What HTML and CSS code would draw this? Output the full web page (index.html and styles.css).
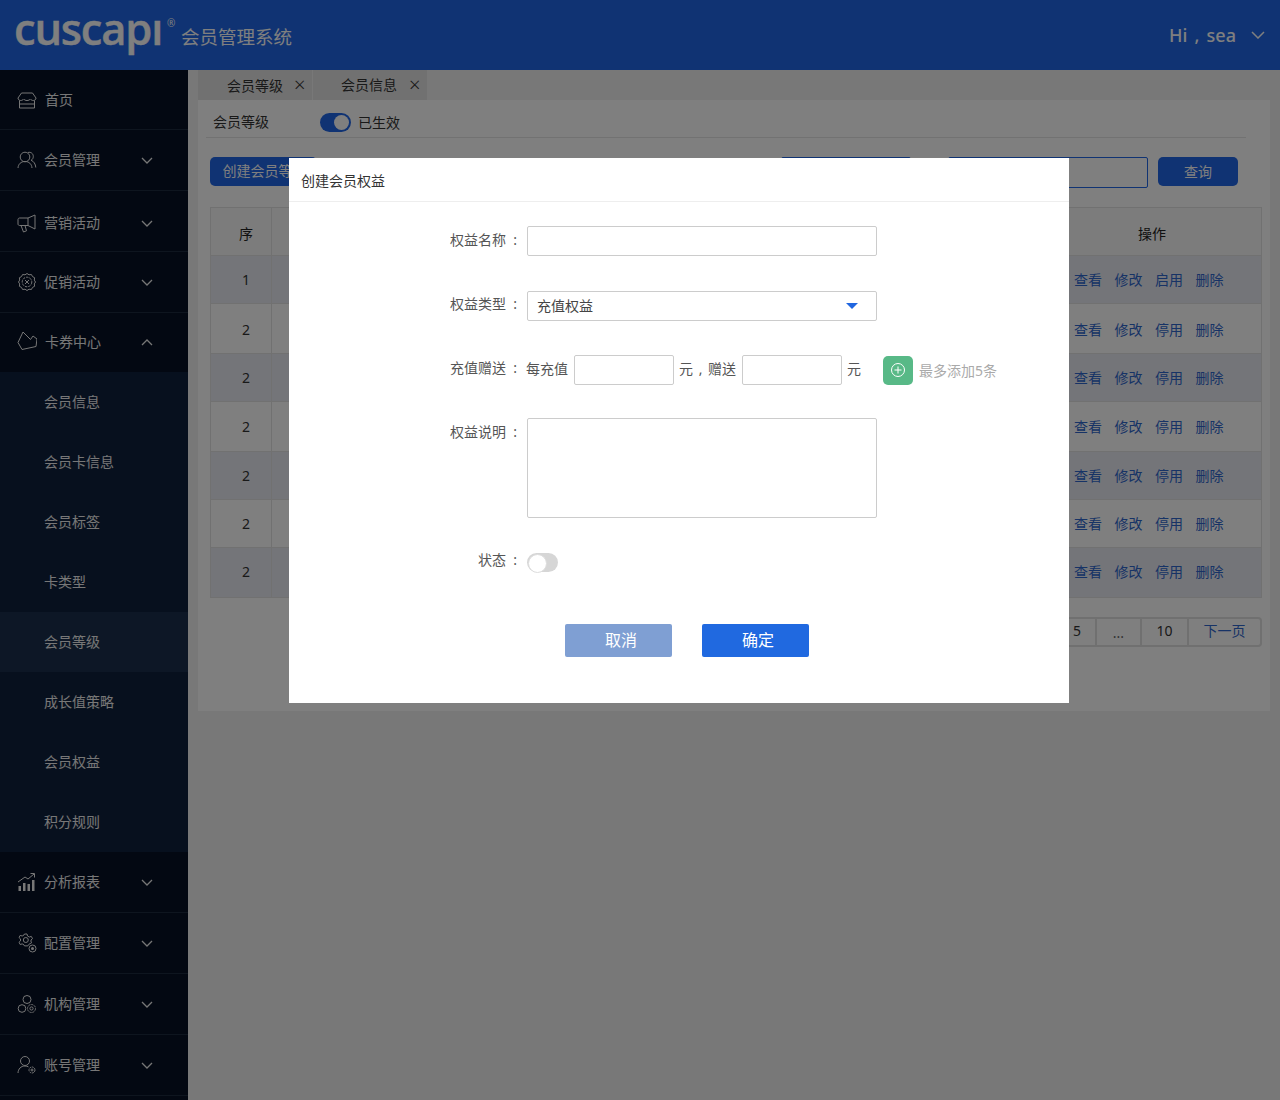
FILE: index.html
```
<!DOCTYPE html>
<html>
<head>
    <meta charset="utf-8">
    <link rel="stylesheet" href="styles.css">
    <title>会员管理系统</title>
</head>
<body>
    <header class="topbar">
        <div class="logo">cuscapı<sup class="logo-mark">®</sup></div>
        <div class="system-name">会员管理系统</div>
        <div class="user">Hi , sea</div>
        <svg class="user-arrow" width="14" height="8" viewBox="0 0 14 8"><path d="M1 1l6 6 6-6" fill="none" stroke="currentColor" stroke-width="1.5"/></svg>
    </header>

    <div class="layout">
        <nav class="sidebar">
            <a class="nav-item">
                <svg class="nav-icon" width="20" height="20" viewBox="0 0 20 20"><path d="M4.500 3h11L19 8c0 1.600-1.300 2.500-2.700 2.500-1.300 0-2.200-.6-2.900-1.500-.7.900-1.900 1.500-3.400 1.500S7.300 9.900 6.600 9c-.7.900-1.600 1.500-2.900 1.500C2.300 10.500 1 9.600 1 8z"/><path d="M2.500 10.500V18h15v-7.500M3 14h14"/></svg>
                <span class="home-text">首页</span>
            </a>
            <a class="nav-item">
                <svg class="nav-icon" width="20" height="20" viewBox="0 0 20 20"><circle cx="8" cy="7" r="4.800"/><path d="M1 18c.3-4 3-6.500 7-6.500s6.700 2.500 7 6.500M11 2.500c2.700-.9 5.300 1 5.300 4 0 1.700-.8 3-2.200 3.800 2.700 1 4.400 3.600 4.700 7.200"/></svg>
                <span>会员管理</span>
                <svg class="nav-arrow" width="12" height="7" viewBox="0 0 12 7"><path d="M1 1l5 5 5-5"/></svg>
            </a>
            <a class="nav-item nudge">
                <svg class="nav-icon" width="20" height="20" viewBox="0 0 20 20"><path d="M18 2v14l-7-3.500H2.500c-.8 0-1.500-.7-1.500-1.500V6.500C1 5.700 1.700 5 2.500 5H11zM11 5v7.500M4 12.500l2.500 6.500 3-1.200L8 12.500"/></svg>
                <span>营销活动</span>
                <svg class="nav-arrow" width="12" height="7" viewBox="0 0 12 7"><path d="M1 1l5 5 5-5"/></svg>
            </a>
            <a class="nav-item">
                <svg class="nav-icon" width="20" height="20" viewBox="0 0 20 20"><path d="M10 1.500l2 1.300 2.400-.3 1.100 2.100 2.100 1.100-.3 2.400 1.200 1.900-1.200 1.900.3 2.400-2.100 1.100-1.100 2.100-2.400-.3-2 1.300-2-1.300-2.400.3-1.100-2.100-2.100-1.100.3-2.400L1.500 10l1.200-1.900-.3-2.400 2.100-1.100 1.100-2.100 2.400.3z"/><circle cx="10" cy="10" r="4.800" stroke-dasharray="2.500 1"/><path d="M8 8l4 4M12 8l-4 4"/></svg>
                <span>促销活动</span>
                <svg class="nav-arrow" width="12" height="7" viewBox="0 0 12 7"><path d="M1 1l5 5 5-5"/></svg>
            </a>
            <a class="nav-item nav-open">
                <svg class="nav-icon card-icon" width="20" height="20" viewBox="0 0 20 20"><path d="M6 1L1 11.500l4 7 14-3 1-7.500-4-3-2.500 3.500z"/></svg>
                <span>卡券中心</span>
                <svg class="nav-arrow" width="12" height="7" viewBox="0 0 12 7"><path d="M1 6l5-5 5 5"/></svg>
            </a>
            <div class="subnav">
                <a class="sub-item">会员信息</a>
                <a class="sub-item">会员卡信息</a>
                <a class="sub-item">会员标签</a>
                <a class="sub-item">卡类型</a>
                <a class="sub-item active">会员等级</a>
                <a class="sub-item">成长值策略</a>
                <a class="sub-item">会员权益</a>
                <a class="sub-item">积分规则</a>
            </div>
            <a class="nav-item">
                <svg class="nav-icon" width="20" height="20" viewBox="0 0 20 20"><path d="M1 10l7-5 3 2 6-5M13.500 1.500H17.500V5.500"/><path class="solid" d="M1.500 14h2.500v5H1.500zM6 11h2.500v8H6zM10.500 12h2.500v7h-2.500zM15 8h2.500v11H15z"/></svg>
                <span>分析报表</span>
                <svg class="nav-arrow" width="12" height="7" viewBox="0 0 12 7"><path d="M1 1l5 5 5-5"/></svg>
            </a>
            <a class="nav-item">
                <svg class="nav-icon" width="20" height="20" viewBox="0 0 20 20"><path d="M7.500 1h2.500l.5 2 1.800 1 2-.6 1.200 2.200-1.500 1.400v2l.8.600-3 1.800-1 1.500H7.500L7 11.900l-1.800-1-2 .6L2 9.300l1.500-1.400v-2L2 4.500l1.200-2.100 2 .6L7 2z"/><circle cx="8.800" cy="7" r="2.500"/><circle cx="15.500" cy="15.500" r="3.500"/><circle class="solid" cx="15.500" cy="15.500" r="1.500"/></svg>
                <span>配置管理</span>
                <svg class="nav-arrow" width="12" height="7" viewBox="0 0 12 7"><path d="M1 1l5 5 5-5"/></svg>
            </a>
            <a class="nav-item">
                <svg class="nav-icon" width="20" height="20" viewBox="0 0 20 20"><circle cx="10" cy="5.500" r="4"/><circle cx="5" cy="14.500" r="3.800"/><circle cx="14.500" cy="14.500" r="4" stroke-dasharray="2.200 .8"/><circle cx="14.500" cy="14.500" r="1.600"/></svg>
                <span>机构管理</span>
                <svg class="nav-arrow" width="12" height="7" viewBox="0 0 12 7"><path d="M1 1l5 5 5-5"/></svg>
            </a>
            <a class="nav-item">
                <svg class="nav-icon" width="20" height="20" viewBox="0 0 20 20"><circle cx="8" cy="6" r="4.500"/><path d="M1 18c.2-4 2.800-7 7-7 1.300 0 2.500.3 3.500.9"/><circle cx="15" cy="15" r="3" stroke-dasharray="2 .7"/><circle cx="15" cy="15" r="1"/></svg>
                <span>账号管理</span>
                <svg class="nav-arrow" width="12" height="7" viewBox="0 0 12 7"><path d="M1 1l5 5 5-5"/></svg>
            </a>
        </nav>

        <main class="content">
            <div class="tabs">
                <div class="tab"><span>会员等级</span><i class="tab-close">×</i></div>
                <div class="tab"><span>会员信息</span><i class="tab-close">×</i></div>
            </div>
            <section class="panel">
                <div class="panel-head">
                    <span class="panel-title">会员等级</span>
                    <span class="switch on"></span>
                    <span class="switch-text">已生效</span>
                </div>
                <div class="toolbar">
                    <button class="btn create-btn">创建会员等级</button>
                    <div class="filter filter-select"></div>
                    <div class="filter filter-input"></div>
                    <button class="btn search-btn">查询</button>
                </div>
                <table class="grid">
                    <thead>
                        <tr><th class="col-no">序</th><th></th><th class="col-ops">操作</th></tr>
                    </thead>
                    <tbody>
                        <tr><td class="col-no">1</td><td></td><td class="ops"><a>查看</a><a>修改</a><a>启用</a><a>删除</a></td></tr>
                        <tr class="row-low"><td class="col-no">2</td><td></td><td class="ops"><a>查看</a><a>修改</a><a>停用</a><a>删除</a></td></tr>
                        <tr><td class="col-no">2</td><td></td><td class="ops"><a>查看</a><a>修改</a><a>停用</a><a>删除</a></td></tr>
                        <tr><td class="col-no">2</td><td></td><td class="ops"><a>查看</a><a>修改</a><a>停用</a><a>删除</a></td></tr>
                        <tr><td class="col-no">2</td><td></td><td class="ops"><a>查看</a><a>修改</a><a>停用</a><a>删除</a></td></tr>
                        <tr class="short"><td class="col-no">2</td><td></td><td class="ops"><a>查看</a><a>修改</a><a>停用</a><a>删除</a></td></tr>
                        <tr class="tall"><td class="col-no">2</td><td></td><td class="ops"><a>查看</a><a>修改</a><a>停用</a><a>删除</a></td></tr>
                    </tbody>
                </table>
                <div class="pager">
                    <a class="page page-num">5</a>
                    <a class="page page-more">...</a>
                    <a class="page page-last">10</a>
                    <a class="page page-next">下一页</a>
                </div>
            </section>
        </main>
    </div>

    <div class="overlay">
        <div class="modal">
            <div class="modal-title">创建会员权益</div>
            <form class="modal-form">
                <div class="form-row row-name">
                    <label class="form-label">权益名称&nbsp;&nbsp;:</label>
                    <input class="field" type="text">
                </div>
                <div class="form-row row-type">
                    <label class="form-label">权益类型&nbsp;&nbsp;:</label>
                    <div class="field select-field">
                        <span>充值权益</span>
                        <i class="caret"></i>
                    </div>
                </div>
                <div class="form-row row-gift">
                    <label class="form-label">充值赠送&nbsp;&nbsp;:</label>
                    <span class="gift-text">每充值</span>
                    <input class="field small-field" type="text">
                    <span class="gift-text">元 , 赠送</span>
                    <input class="field small-field" type="text">
                    <span class="gift-text">元</span>
                    <button class="add-btn" type="button">
                        <svg width="16" height="16" viewBox="0 0 16 16"><circle cx="8" cy="8" r="6.500"/><path d="M8 4.500v7M4.500 8h7"/></svg>
                    </button>
                    <span class="add-hint">最多添加5条</span>
                </div>
                <div class="form-row row-desc">
                    <label class="form-label">权益说明&nbsp;&nbsp;:</label>
                    <textarea class="field desc-field"></textarea>
                </div>
                <div class="form-row row-state">
                    <label class="form-label">状态&nbsp;&nbsp;:</label>
                    <span class="switch off"></span>
                </div>
                <div class="form-actions">
                    <button class="action cancel" type="button">取消</button>
                    <button class="action confirm" type="button">确定</button>
                </div>
            </form>
        </div>
    </div>
</body>
</html>
```
FILE: styles.css
```
* {
    box-sizing: border-box;
}

body {
    margin: 0;
    height: 1100px;
    overflow: hidden;
    background-color: #f0f0f0;
    color: #333;
    font-family: "Noto Sans", "Noto Sans CJK SC", sans-serif;
    font-size: 14px;
}

button,
input,
textarea {
    font-family: inherit;
}

/* top bar */
.topbar {
    display: flex;
    align-items: center;
    height: 70px;
    padding: 0 15px;
    background-color: #2066e6;
    color: #fff;
}

.logo {
    width: 166px;
    margin: -12px 0 0 -1px;
    font-family: "Open Sans", sans-serif;
    font-size: 43.5px;
    font-weight: 600;
    line-height: 60px;
    letter-spacing: -1.2px;
    white-space: nowrap;
    flex-shrink: 0;
    -webkit-text-stroke: 0.4px #fff;
}

.logo-mark {
    position: relative;
    top: -18px;
    margin-left: 5px;
    font-size: 10px;
    font-weight: 400;
    line-height: 0;
    letter-spacing: 0;
    vertical-align: baseline;
    -webkit-text-stroke: 0;
}

.system-name {
    margin: 2px 0 0 1px;
    font-size: 18.5px;
}

.user {
    margin-left: auto;
    font-size: 18px;
    font-weight: 500;
    word-spacing: 2.5px;
}

.user-arrow {
    margin-left: 15px;
    color: #fff;
}

/* side menu */
.layout {
    display: flex;
    height: 1030px;
}

.sidebar {
    width: 188px;
    flex-shrink: 0;
    background-color: #061024;
    color: #eee;
}

.nav-item {
    display: flex;
    align-items: center;
    height: 61px;
    padding: 0 35px 0 17px;
    border-bottom: 1px solid #1c2a3e;
}

.nav-item span {
    margin-top: -2px;
}

.nav-item:first-child {
    height: 60px;
}

.nav-item.nudge {
    padding-top: 4px;
}

.nav-item.nav-open {
    height: 59px;
    border-bottom: none;
}

.nav-open span {
    margin-top: -3px;
}

.nav-icon {
    flex-shrink: 0;
    margin-right: 7px;
}

.nav-item .home-text {
    margin-left: 1px;
}

.card-icon {
    margin: -4px 8px 0 0;
}

.nav-icon * {
    fill: none;
    stroke: currentColor;
    stroke-width: 1;
}

.nav-icon .solid {
    fill: currentColor;
    stroke: none;
}

.nav-arrow {
    margin-left: auto;
}

.nav-arrow path {
    fill: none;
    stroke: currentColor;
    stroke-width: 1.3;
}

.subnav {
    background-color: #0e203c;
}

.sub-item {
    display: flex;
    align-items: center;
    height: 60px;
    padding: 0 0 2px 44px;
}

.sub-item.active {
    background-color: #1a2e4c;
}

/* main area */
.content {
    flex: 1;
    padding-left: 10px;
    padding-right: 10px;
}

.tabs {
    display: flex;
    gap: 1px;
    height: 30px;
}

.tab {
    display: flex;
    align-items: center;
    width: 114px;
    padding-left: 29px;
    background-color: #e2e2e2;
    color: #333;
}

.tab:last-child {
    padding-left: 28px;
}

.tab:last-child span {
    margin-top: -2px;
}

.tab-close {
    margin-left: 11px;
    font-size: 20px;
    font-style: normal;
    font-weight: 300;
    line-height: 1;
}

.tab:last-child .tab-close {
    margin-left: 12px;
}

.panel {
    height: 611px;
    padding: 0 8px 0 12px;
    background-color: #fff;
}

.panel-head {
    display: flex;
    align-items: center;
    width: 1040px;
    height: 38px;
    margin-left: -4px;
    padding: 7px 0 0 7px;
    border-bottom: 1px solid #e4e4e4;
}

.panel-title {
    width: 107px;
    margin-top: -2px;
}

.switch {
    display: inline-block;
    position: relative;
    width: 31px;
    height: 19px;
    border-radius: 10px;
}

.switch::after {
    content: "";
    position: absolute;
    top: 2px;
    width: 15px;
    height: 15px;
    border-radius: 50%;
    background-color: #fff;
}

.switch.on {
    background-color: #2066e6;
}

.switch.on::after {
    right: 2px;
}

.switch.off {
    background-color: #d6d6d6;
}

.switch.off::after {
    left: 1px;
    top: 1px;
    width: 17px;
    height: 17px;
    border: 1px solid #ddd;
}

.switch-text {
    margin-left: 7px;
}

.toolbar {
    display: flex;
    align-items: flex-start;
    height: 50px;
    margin-top: 19px;
    padding-right: 24px;
}

.btn {
    flex-shrink: 0;
    height: 29px;
    padding: 0 0 3px;
    border: none;
    border-radius: 5px;
    background-color: #2066e6;
    color: #fff;
    font-size: 14px;
}

.create-btn {
    width: 107px;
    padding-left: 2px;
    white-space: nowrap;
}

.filter {
    height: 31px;
    border: 1px solid #2066e6;
    border-radius: 2px;
}

.filter-select {
    width: 130px;
    margin-left: auto;
}

.filter-input {
    width: 200px;
    margin-left: 37px;
}

.search-btn {
    width: 80px;
    margin-left: 10px;
    padding-bottom: 1px;
}

.grid {
    width: 1052px;
    border-collapse: collapse;
    table-layout: fixed;
}

.grid th,
.grid td {
    border: 1px solid #e2e2e2;
    font-weight: 400;
    text-align: center;
}

.grid th {
    height: 48px;
    padding-top: 3px;
    background-color: #f8f8f8;
    color: #222;
}

.grid th.col-ops {
    width: 220px;
    padding-left: 2px;
}

.col-no {
    width: 61px;
    padding-left: 11px;
}

.grid tbody tr:nth-child(odd) {
    height: 48px;
    background-color: #e8ebf3;
}

.grid tbody tr:nth-child(even) {
    height: 50px;
}

.grid tbody tr.short {
    height: 48px;
}

.grid tbody tr.tall {
    height: 50px;
}

.grid .ops {
    padding: 0 0 2px 32px;
    text-align: left;
}

.grid tr.row-low td {
    padding-top: 2px;
    padding-bottom: 0;
}

.grid tr.row-low .ops {
    padding-top: 0;
}

.grid tr.tall td {
    padding-bottom: 3px;
}

.ops a {
    margin-right: 12.5px;
    color: #2f66cc;
}

.pager {
    display: flex;
    justify-content: flex-end;
    width: 1052px;
    height: 30px;
    margin-top: 19px;
}

.page {
    display: flex;
    align-items: center;
    justify-content: center;
    padding-bottom: 4px;
    border: 2px solid #e0e0e0;
    border-left-width: 0;
}

.page-num {
    width: 38px;
}

.page-more {
    width: 45px;
    padding-bottom: 0;
    color: #666;
}

.page-last {
    width: 47px;
}

.page-next {
    width: 73px;
    border-radius: 0 4px 4px 0;
    color: #2f66cc;
}

/* dialog */
.overlay {
    position: fixed;
    top: 0;
    left: 0;
    right: 0;
    bottom: 0;
    padding: 158px 0 0 289px;
    background-color: rgba(0, 0, 0, 0.5);
}

.modal {
    width: 780px;
    height: 545px;
    background-color: #fff;
}

.modal-title {
    height: 44px;
    padding: 13px 12px 0;
    border-bottom: 1px solid #eee;
    color: #333;
    line-height: 20px;
}

.modal-form {
    padding-top: 24px;
}

.form-row {
    display: flex;
    align-items: center;
}

.form-label {
    width: 228px;
    margin: -5px 10px 0 0;
    color: #555;
    text-align: right;
}

.row-type .form-label,
.row-gift .form-label,
.row-state .form-label {
    margin-top: -7px;
}

.field {
    display: block;
    width: 350px;
    height: 30px;
    padding: 0 9px;
    border: 1px solid #ccc;
    border-radius: 2px;
    background-color: #fff;
    outline: none;
}

.row-type {
    margin-top: 35px;
}

.row-gift {
    margin-top: 34px;
}

.row-desc {
    align-items: flex-start;
    margin-top: 33px;
}

.row-desc .form-label {
    margin-top: 3px;
}

.row-state {
    margin-top: 35px;
}

.select-field {
    display: flex;
    align-items: center;
    justify-content: space-between;
    padding-right: 18px;
    color: #444;
}

.select-field span {
    margin-top: -2px;
}

.caret {
    margin-top: -1px;
    border-top: 6px solid #2066e0;
    border-left: 6px solid transparent;
    border-right: 6px solid transparent;
}

.gift-text {
    margin: -4px 0 0 -1px;
    color: #555;
    white-space: nowrap;
    word-spacing: 2px;
}

.small-field {
    width: 100px;
    margin: 0 5px 0 6px;
}

.small-field + .gift-text {
    margin-left: 0;
}

.add-btn {
    display: flex;
    align-items: center;
    justify-content: center;
    flex-shrink: 0;
    width: 30px;
    height: 29px;
    margin-left: 22px;
    padding: 0;
    border: none;
    border-radius: 5px;
    background-color: #58b987;
}

.add-btn circle,
.add-btn path {
    fill: none;
    stroke: #fff;
    stroke-width: 1;
}

.add-hint {
    margin: 0 0 0 6px;
    color: #aaa;
}

.desc-field {
    height: 100px;
    resize: none;
}

.form-actions {
    display: flex;
    gap: 30px;
    margin: 52px 0 0 276px;
}

.action {
    width: 107px;
    height: 33px;
    padding: 0 0 3px 5px;
    border: none;
    border-radius: 2px;
    color: #fff;
    font-size: 16px;
}

.cancel {
    background-color: #7f9fd3;
}

.confirm {
    background-color: #2069e0;
}
```
